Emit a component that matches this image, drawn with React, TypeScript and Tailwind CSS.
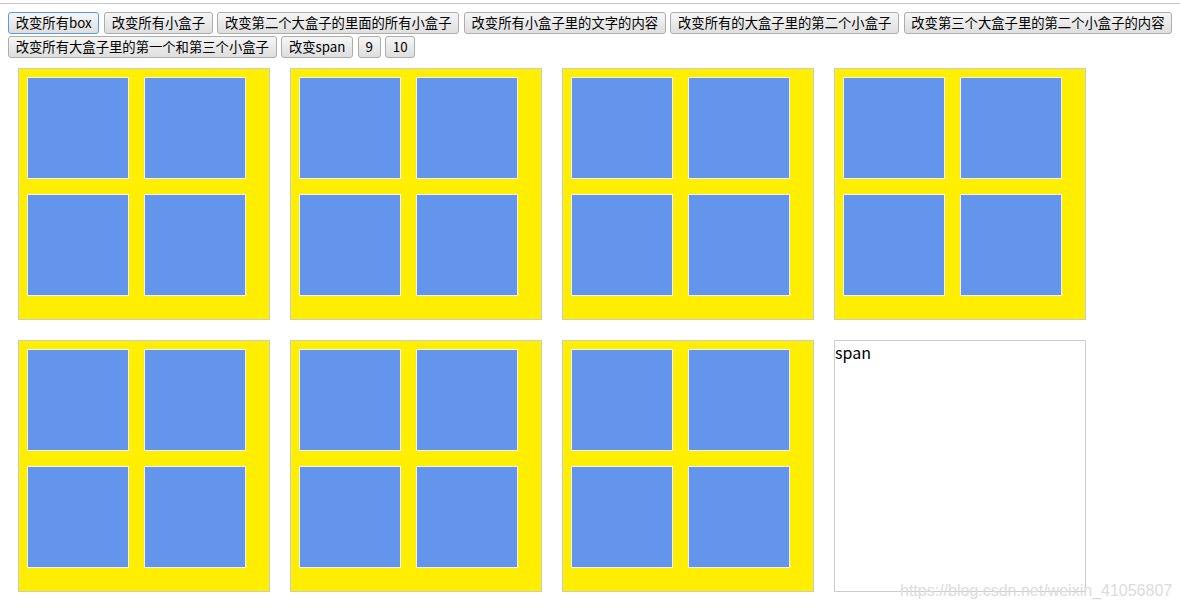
import React from "react";

const row1 = [
  "改变所有box",
  "改变所有小盒子",
  "改变第二个大盒子的里面的所有小盒子",
  "改变所有小盒子里的文字的内容",
  "改变所有的大盒子里的第二个小盒子",
  "改变第三个大盒子里的第二个小盒子的内容",
];
const row2 = ["改变所有大盒子里的第一个和第三个小盒子", "改变span", "9", "10"];

function Btn({ label, focused }: { label: string; focused?: boolean }) {
  return (
    <button
      className={
        "h-[22px] shrink-0 whitespace-nowrap rounded-[3px] border px-[6.7px] text-[13.33px] leading-[20px] text-black bg-gradient-to-b from-[#f6f6f6] to-[#dedede] " +
        (focused ? "border-[#569de5]" : "border-[#adadad]")
      }
      style={{ fontFamily: '"Noto Sans CJK SC", "Noto Sans", sans-serif' }}
    >
      {label}
    </button>
  );
}

function BigBox() {
  return (
    <div className="m-[10px] h-[252px] w-[252px] border border-[#cccccc] bg-[#ffee00] pl-[8px] pt-[8px]">
      <div className="grid grid-cols-[102px_102px] gap-[15px]">
        {[0, 1, 2, 3].map((i) => (
          <div key={i} className="h-[102px] w-[102px] border border-[#f2f2f2] bg-[#6495ed]" />
        ))}
      </div>
    </div>
  );
}

export default function App() {
  return (
    <div className="relative h-[610px] w-[1180px] overflow-hidden bg-white">
      <div className="h-[3px]" />
      <div className="h-px w-full bg-[#c4c4c4]" />
      <div className="px-[8px] pt-[8px]">
        <div className="flex gap-[4.6px]">
          {row1.map((l, i) => (
            <Btn key={l} label={l} focused={i === 0} />
          ))}
        </div>
        <div className="mt-[2px] flex gap-[4.6px]">
          {row2.map((l) => (
            <Btn key={l} label={l} />
          ))}
        </div>
        <div className="flex w-[1088px] flex-wrap">
          {[0, 1, 2, 3, 4, 5, 6].map((i) => (
            <BigBox key={i} />
          ))}
          <div className="m-[10px] h-[252px] w-[252px] border border-[#cccccc] bg-white">
            <span
              className="text-[16px] leading-[22px] text-black"
              style={{ fontFamily: '"Noto Sans CJK SC", "Noto Sans", sans-serif' }}
            >
              span
            </span>
          </div>
        </div>
      </div>
      <div
        className="absolute left-[900px] top-[582px] whitespace-nowrap text-[16px] leading-[18px] text-[#dcdcdc]"
        style={{ fontFamily: '"Liberation Sans", Arial, sans-serif' }}
      >
        https://blog.csdn.net/weixin_41056807
      </div>
    </div>
  );
}
